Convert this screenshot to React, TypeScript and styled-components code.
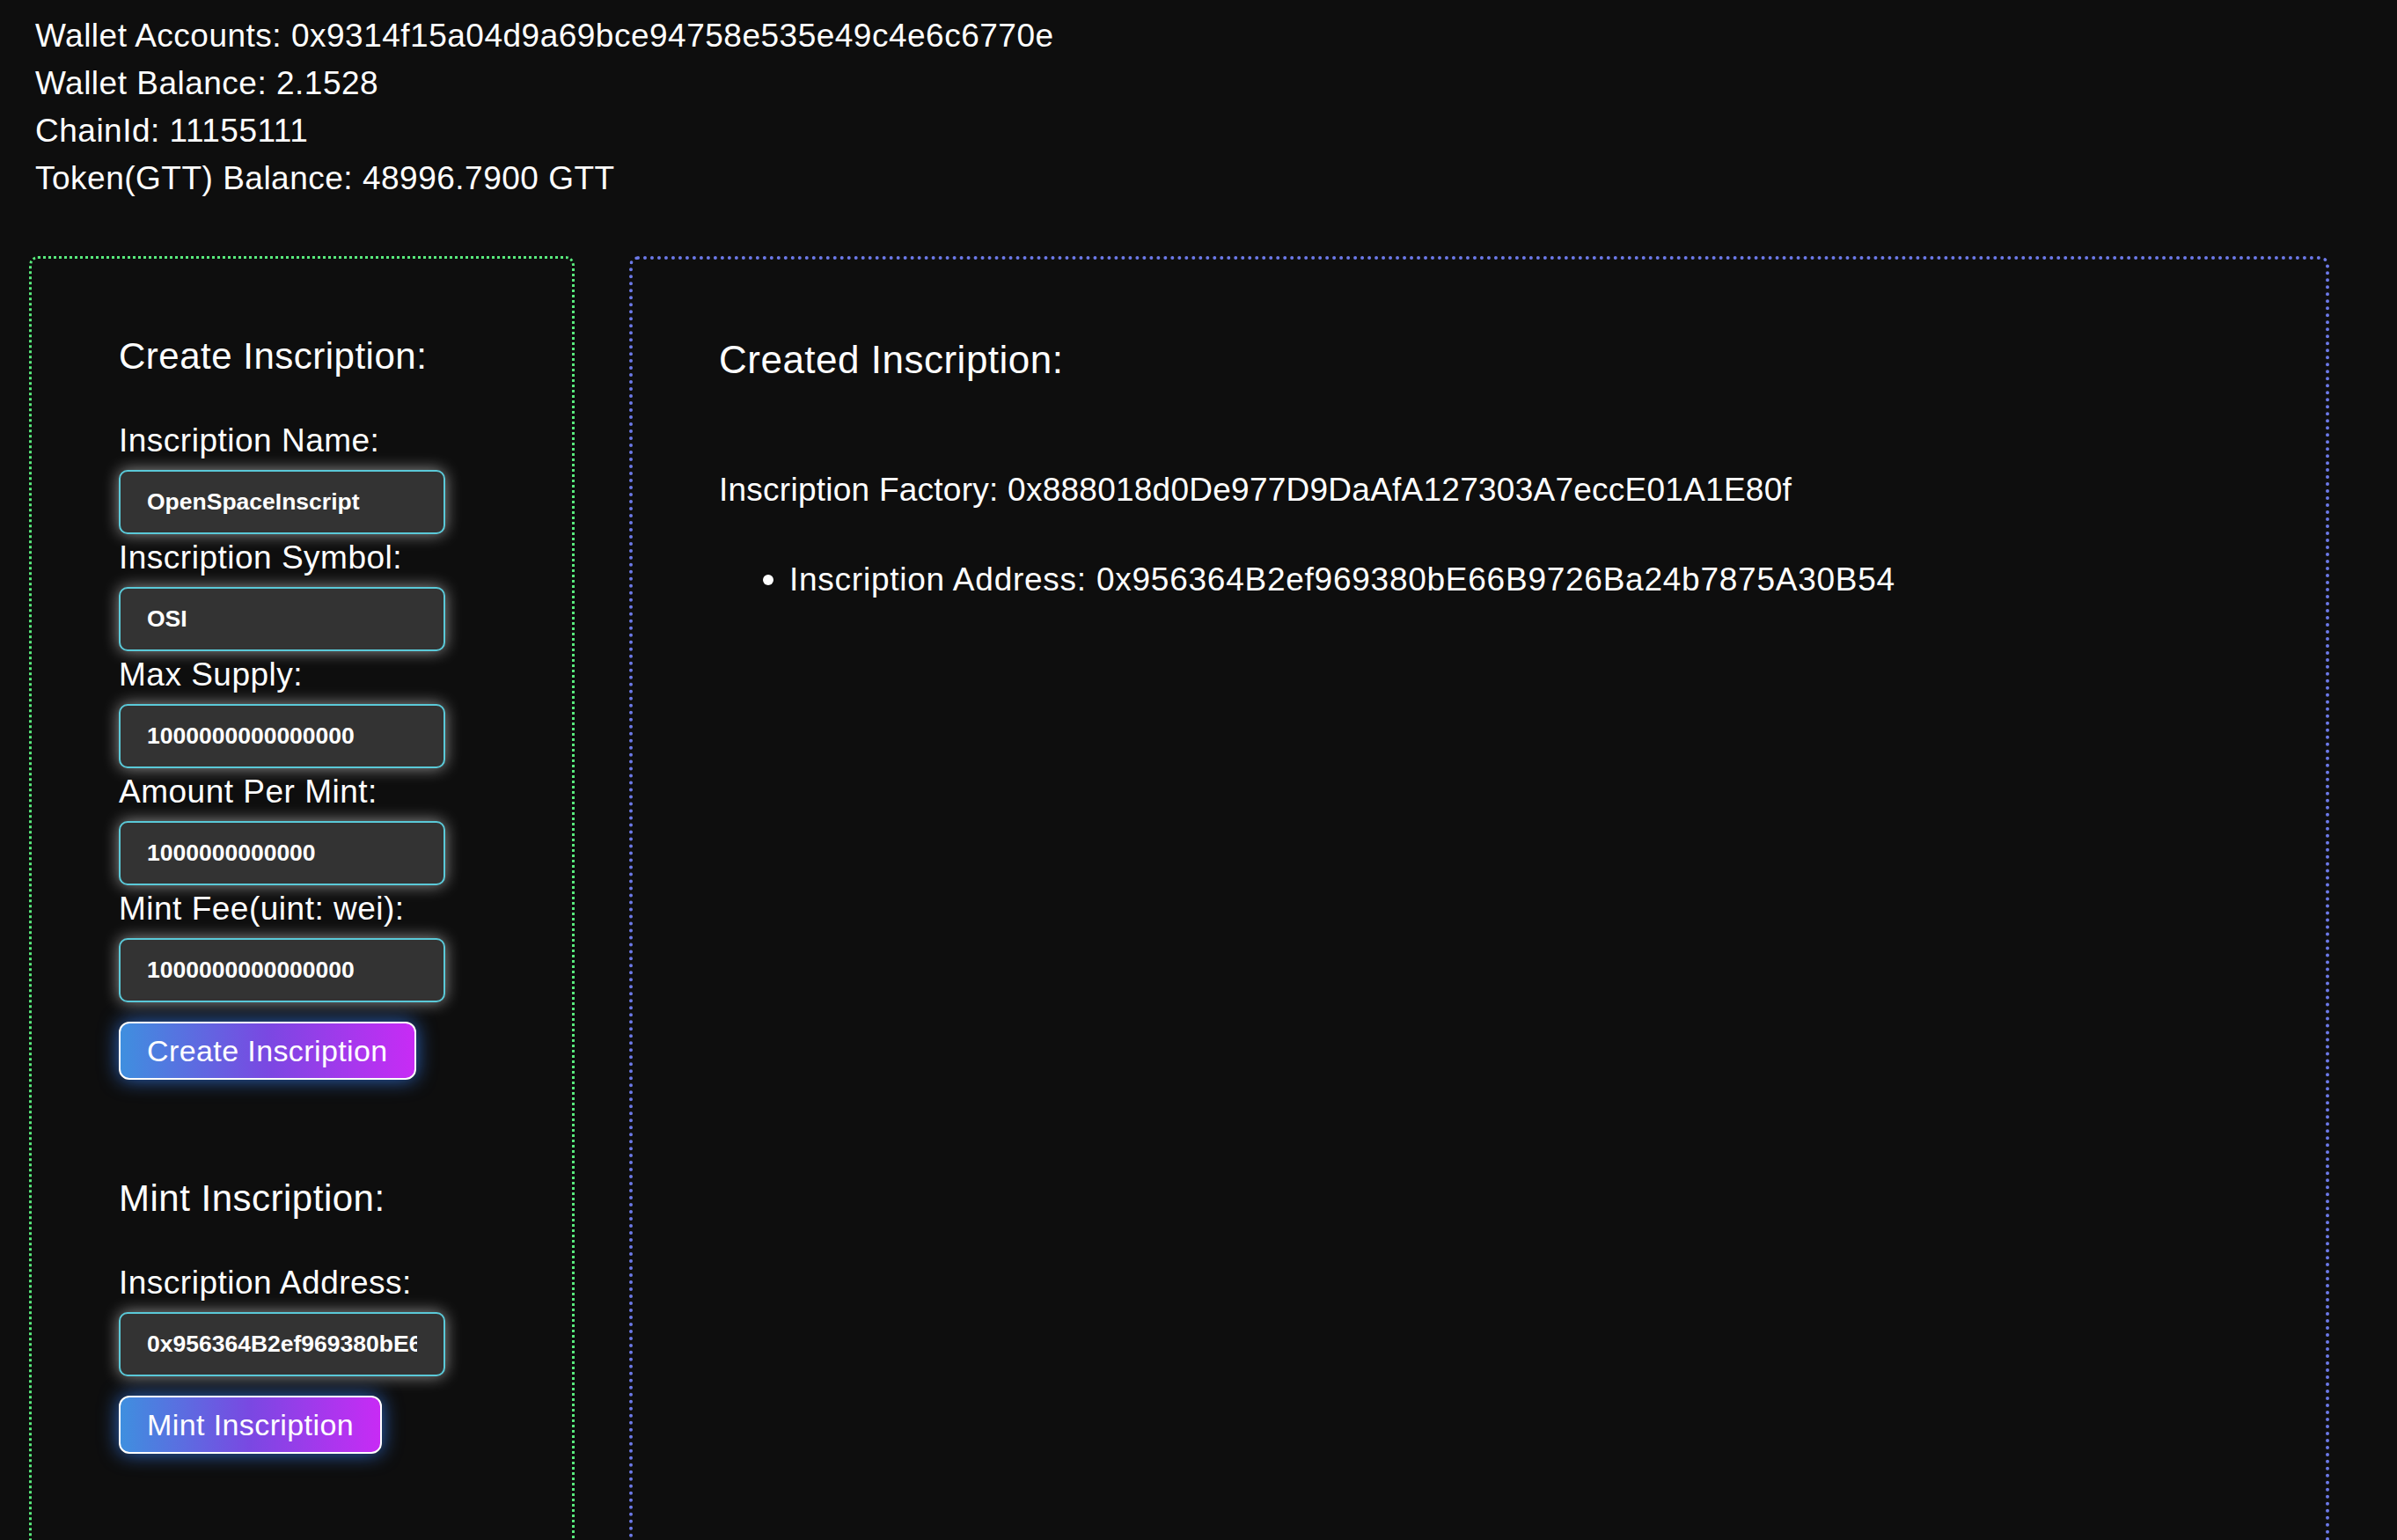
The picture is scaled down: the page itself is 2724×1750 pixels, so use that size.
import React from "react";
import styled, { createGlobalStyle } from "styled-components";

const GlobalStyle = createGlobalStyle`
  html, body {
    margin: 0;
    padding: 0;
    background: #0e0e0e;
  }
  body {
    font-family: "Liberation Sans", Arial, sans-serif;
    color: #ffffff;
  }
  * { box-sizing: border-box; }
`;

const Page = styled.div`
  height: 100vh;
  overflow: hidden;
  background: #0e0e0e;
  color: #ffffff;
  font-family: "Liberation Sans", Arial, sans-serif;
`;

const InfoBlock = styled.div`
  padding: 14px 0 0 40px;
  display: flex;
  flex-direction: column;
`;

const InfoLine = styled.div`
  font-size: 37px;
  letter-spacing: 0.5px;
  line-height: 54px;
  white-space: nowrap;
`;

const PanelRow = styled.div`
  display: flex;
  align-items: stretch;
  gap: 62px;
  margin-top: 61px;
  padding: 0 77px 0 33px;
  min-height: 1600px;
`;

const Panel = styled.section<{ $tone: "green" | "blue" }>`
  border: ${(p) => (p.$tone === "green" ? "3px dotted #58ea7c" : "4px dotted #6c79e8")};
  border-radius: 10px;
  padding: 0 0 0 ${(p) => (p.$tone === "green" ? 99 : 98)}px;
  flex: ${(p) => (p.$tone === "green" ? "0 0 620px" : "1 1 auto")};
  display: flex;
  flex-direction: column;
`;

const Section = styled.div<{ $gapTop: number }>`
  display: flex;
  flex-direction: column;
  align-items: flex-start;
  margin-top: ${(p) => p.$gapTop}px;
`;

const SectionTitle = styled.h3<{ $size?: number }>`
  margin: 0;
  font-size: ${(p) => p.$size ?? 42}px;
  font-weight: 400;
  letter-spacing: 0.5px;
  line-height: 50px;
  white-space: nowrap;
`;

const FieldLabel = styled.label<{ $first?: boolean }>`
  display: block;
  margin-top: ${(p) => (p.$first ? 44 : 0)}px;
  font-size: 37px;
  letter-spacing: 0.5px;
  line-height: 54px;
  white-space: nowrap;
`;

const TextInput = styled.input`
  display: block;
  width: 371px;
  height: 73px;
  margin-top: 6px;
  padding: 0 30px;
  border: 2px solid #5ac9d8;
  border-radius: 10px;
  background: #333333;
  color: #ffffff;
  font-family: "Liberation Sans", Arial, sans-serif;
  font-weight: 700;
  font-size: 26.5px;
  outline: none;
  box-shadow: 0 0 18px rgba(255, 255, 255, 0.55);
`;

const GlowButton = styled.button`
  margin-top: 22px;
  height: 66px;
  padding: 0 30px;
  border: 2px solid #ffffff;
  border-radius: 12px;
  background: linear-gradient(90deg, #3f8fdf 0%, #7a48e2 50%, #c82bf5 100%);
  color: #ffffff;
  font-family: "Liberation Sans", Arial, sans-serif;
  font-size: 34px;
  letter-spacing: 0.4px;
  white-space: nowrap;
  cursor: pointer;
  box-shadow: 0 0 22px rgba(56, 132, 255, 0.75);
`;

const ResultLine = styled.div<{ $gapTop: number }>`
  margin-top: ${(p) => p.$gapTop}px;
  font-size: 37px;
  letter-spacing: 0.25px;
  line-height: 54px;
  white-space: nowrap;
`;

const ResultList = styled.ul`
  list-style: none;
  margin: 48px 0 0 0;
  padding: 0;
`;

const ResultItem = styled.li`
  display: flex;
  align-items: center;
  gap: 18px;
  padding-left: 50px;
  font-size: 37px;
  letter-spacing: 0.75px;
  line-height: 54px;
  white-space: nowrap;
`;

const Bullet = styled.span`
  width: 12px;
  height: 12px;
  border-radius: 50%;
  background: #ffffff;
  flex: 0 0 auto;
`;

const createFields = [
  { label: "Inscription Name:", value: "OpenSpaceInscript" },
  { label: "Inscription Symbol:", value: "OSI" },
  { label: "Max Supply:", value: "1000000000000000" },
  { label: "Amount Per Mint:", value: "1000000000000" },
  { label: "Mint Fee(uint: wei):", value: "1000000000000000" },
];

export default function App() {
  return (
    <Page>
      <GlobalStyle />
      <InfoBlock>
        <InfoLine>Wallet Accounts: 0x9314f15a04d9a69bce94758e535e49c4e6c6770e</InfoLine>
        <InfoLine>Wallet Balance: 2.1528</InfoLine>
        <InfoLine>ChainId: 11155111</InfoLine>
        <InfoLine>Token(GTT) Balance: 48996.7900 GTT</InfoLine>
      </InfoBlock>
      <PanelRow>
        <Panel $tone="green">
          <Section $gapTop={86}>
            <SectionTitle>Create Inscription:</SectionTitle>
            {createFields.map((f, i) => (
              <React.Fragment key={f.label}>
                <FieldLabel $first={i === 0}>{f.label}</FieldLabel>
                <TextInput defaultValue={f.value} />
              </React.Fragment>
            ))}
            <GlowButton>Create Inscription</GlowButton>
          </Section>
          <Section $gapTop={110}>
            <SectionTitle>Mint Inscription:</SectionTitle>
            <FieldLabel $first>Inscription Address:</FieldLabel>
            <TextInput defaultValue="0x956364B2ef969380bE66B9726Ba24b7875A30B54" />
            <GlowButton>Mint Inscription</GlowButton>
          </Section>
        </Panel>
        <Panel $tone="blue">
          <Section $gapTop={89}>
            <SectionTitle $size={44}>Created Inscription:</SectionTitle>
            <ResultLine $gapTop={96}>
              Inscription Factory: 0x888018d0De977D9DaAfA127303A7eccE01A1E80f
            </ResultLine>
            <ResultList>
              <ResultItem>
                <Bullet />
                Inscription Address: 0x956364B2ef969380bE66B9726Ba24b7875A30B54
              </ResultItem>
            </ResultList>
          </Section>
        </Panel>
      </PanelRow>
    </Page>
  );
}
